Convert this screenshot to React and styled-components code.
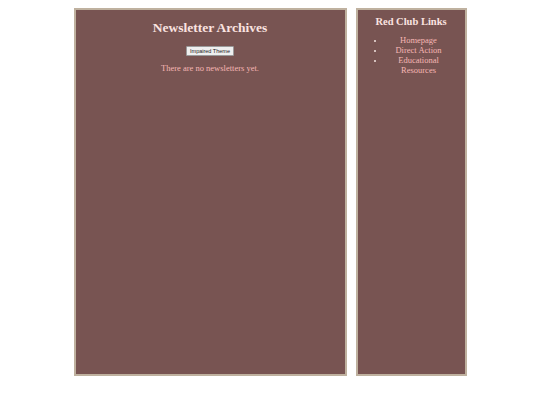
import React from 'react';
import styled, { createGlobalStyle } from 'styled-components';

const GlobalStyle = createGlobalStyle`
  html, body {
    margin: 0;
    padding: 0;
    background: #ffffff;
  }
  body {
    font-family: 'Liberation Serif', 'Times New Roman', serif;
  }
`;

const Page = styled.div`
  display: flex;
  justify-content: center;
  gap: 9px;
  padding-top: 8px;
`;

const Panel = styled.section`
  box-sizing: border-box;
  width: ${(p) => p.$width}px;
  height: 368px;
  background-color: #785452;
  border: 2px solid #bfb19f;
  text-align: center;
`;

const Title = styled.h1`
  margin: 10px 0 0;
  font-size: 13.5px;
  font-weight: bold;
  color: #fbe3e0;
  line-height: 16px;
`;

const SideTitle = styled.h2`
  margin: 5px 0 0;
  font-size: 10.5px;
  font-weight: bold;
  color: #fbe3e0;
  line-height: 14px;
`;

const ThemeButton = styled.button`
  margin-top: 10px;
  font-family: 'Liberation Sans', Arial, sans-serif;
  font-size: 5.5px;
  padding: 1px 3px;
  line-height: 6px;
  background: #efefef;
  border: 1px solid #9a9a9a;
  border-radius: 1px;
  color: #222;
`;

const Message = styled.p`
  margin: 6px 0 0;
  font-size: 8.5px;
  color: #f6b6b4;
  line-height: 11px;
`;

const LinkList = styled.ul`
  margin: 6px 0 0;
  padding: 0 12px 0 27px;
  list-style: disc;
  text-align: center;
  color: #f3e3e0;
  font-size: 8.5px;
  line-height: 10px;
  li::marker {
    font-size: 7px;
  }
`;

const LinkItem = styled.li`
  a {
    color: #f6b6b4;
    text-decoration: none;
  }
`;

export default function App() {
  return (
    <>
      <GlobalStyle />
      <Page>
        <Panel $width={273}>
          <Title>Newsletter Archives</Title>
          <ThemeButton>Impaired Theme</ThemeButton>
          <Message>There are no newsletters yet.</Message>
        </Panel>
        <Panel $width={111}>
          <SideTitle>Red Club Links</SideTitle>
          <LinkList>
            <LinkItem><a href="#home">Homepage</a></LinkItem>
            <LinkItem><a href="#action">Direct Action</a></LinkItem>
            <LinkItem><a href="#edu">Educational Resources</a></LinkItem>
          </LinkList>
        </Panel>
      </Page>
    </>
  );
}
